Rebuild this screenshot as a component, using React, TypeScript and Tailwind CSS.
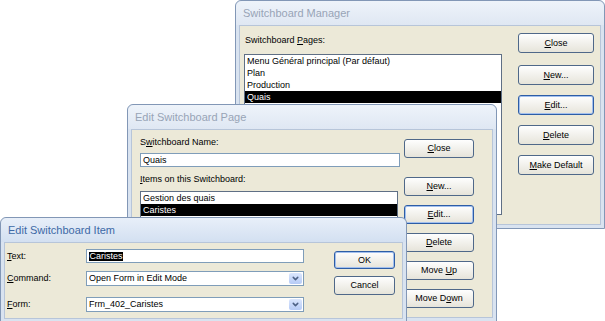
import { ChevronDown } from "lucide-react";
import type { ReactNode } from "react";

// text with the access key underlined
function Mn({ text, k }: { text: string; k?: number }) {
  if (k === undefined) return <span>{text}</span>;
  return (
    <span className="whitespace-pre">
      {text.slice(0, k)}
      <span className="underline underline-offset-1">{text[k]}</span>
      {text.slice(k + 1)}
    </span>
  );
}

function Btn({ label, k, def, cls }: { label: string; k?: number; def?: boolean; cls: string }) {
  return (
    <div
      className={`flex items-center justify-center rounded-[3px] border bg-gradient-to-b from-[#fefefe] to-[#e6e4da] text-[9px] leading-none text-black ${
        def ? "border-[#2d5da6] shadow-[inset_0_0_0_1px_#a3c0ee]" : "border-[#4f6889]"
      } ${cls}`}
    >
      <Mn text={label} k={k} />
    </div>
  );
}

function Win({ title, active, pos, children }: { title: string; active?: boolean; pos: string; children: ReactNode }) {
  return (
    <div className={`absolute flex flex-col rounded-t-[6px] border border-[#8297b6] bg-[#d9e3f0] ${pos}`}>
      <div
        className={`flex h-[24px] shrink-0 items-center rounded-t-[6px] bg-gradient-to-b pl-[7px] text-[11px] ${
          active ? "from-[#e8eff9] to-[#d3e0f1] text-[#3d69a6]" : "from-[#eef3fa] to-[#dfe7f3] text-[#98a4b6]"
        }`}
      >
        {title}
      </div>
      <div className="mx-[3px] mb-[3px] flex flex-1 border border-[#b7c5d9] bg-[#ece9d8]">{children}</div>
    </div>
  );
}

function ListBox({ items, sel, cls }: { items: string[]; sel: number; cls: string }) {
  return (
    <div className={`border border-[#5f6f85] bg-white ${cls}`}>
      {items.map((it, i) => (
        <div
          key={it}
          className={`h-[12px] pl-[2px] text-[9px] leading-[12px] ${i === sel ? "bg-black text-white" : "text-black"}`}
        >
          {it}
        </div>
      ))}
    </div>
  );
}

function Combo({ value }: { value: string }) {
  return (
    <div className="flex h-[15px] w-[218px] items-center border border-[#7f9db9] bg-white pl-[2px] text-[9px] leading-none">
      <span className="flex-1">{value}</span>
      <div className="mr-[1px] flex h-[11px] w-[13px] items-center justify-center rounded-[2px] bg-gradient-to-b from-[#dbe6fd] to-[#b6cbf6]">
        <ChevronDown className="h-[9px] w-[9px] text-[#4d6185]" strokeWidth={4} />
      </div>
    </div>
  );
}

export default function App() {
  return (
    <div className="relative h-[321px] w-[605px] overflow-hidden bg-white font-['Liberation_Sans',Arial,sans-serif]">
      {/* Switchboard Manager */}
      <Win title="Switchboard Manager" pos="left-[235px] top-0 w-[370px] h-[229px]">
        <div className="flex flex-col pl-[4px] pt-[8px]">
          <div className="ml-[1px] h-[12px] text-[9px] leading-[12px]">
            <Mn text="Switchboard Pages:" k={12} />
          </div>
          <ListBox
            cls="mt-[8px] w-[258px] h-[161px]"
            sel={3}
            items={["Menu Général principal (Par défaut)", "Plan", "Production", "Quais"]}
          />
        </div>
        <div className="ml-[16px] flex flex-col gap-[10px] pt-[7px]">
          <Btn label="Close" k={0} cls="w-[76px] h-[20px]" />
          <Btn label="New..." k={0} cls="w-[76px] h-[20px] mt-[2px]" />
          <Btn label="Edit..." k={0} def cls="w-[76px] h-[20px]" />
          <Btn label="Delete" k={0} cls="w-[76px] h-[20px]" />
          <Btn label="Make Default" k={0} cls="w-[76px] h-[20px]" />
        </div>
      </Win>

      {/* Edit Switchboard Page */}
      <Win title="Edit Switchboard Page" pos="left-[127px] top-[104px] w-[370px] h-[218px]">
        <div className="flex w-[269px] flex-col pl-[8px] pt-[6px]">
          <div className="h-[12px] text-[9px] leading-[12px]">
            <Mn text="Switchboard Name:" k={1} />
          </div>
          <div className="mt-[5px] h-[14px] w-[260px] border border-[#7f9db9] bg-white pl-[2px] text-[9px] leading-[12px]">
            Quais
          </div>
          <div className="mt-[6px] h-[12px] text-[9px] leading-[12px]">
            <Mn text="Items on this Switchboard:" k={0} />
          </div>
          <ListBox cls="mt-[6px] w-[258px] h-[110px]" sel={1} items={["Gestion des quais", "Caristes"]} />
        </div>
        <div className="ml-[3px] flex flex-col pt-[9px]">
          <Btn label="Close" k={0} cls="w-[70px] h-[19px]" />
          <Btn label="New..." k={0} cls="w-[70px] h-[19px] mt-[19px]" />
          <Btn label="Edit..." k={0} def cls="w-[70px] h-[19px] mt-[9px]" />
          <Btn label="Delete" k={0} cls="w-[70px] h-[19px] mt-[9px]" />
          <Btn label="Move Up" k={5} cls="w-[70px] h-[19px] mt-[9px]" />
          <Btn label="Move Down" k={6} cls="w-[70px] h-[19px] mt-[9px]" />
        </div>
      </Win>

      {/* Edit Switchboard Item */}
      <Win title="Edit Switchboard Item" active pos="left-0 top-[217px] w-[407px] h-[106px]">
        <div className="flex flex-col pl-[2px] pt-[6px] text-[9px] leading-none">
          <div className="flex h-[14px] items-center">
            <span className="w-[79px]">
              <Mn text="Text:" k={0} />
            </span>
            <div className="flex h-[14px] w-[218px] items-center border border-[#7f9db9] bg-white pl-[2px]">
              <span className="bg-black px-[0.5px] text-white">Caristes</span>
            </div>
          </div>
          <div className="mt-[8px] flex h-[15px] items-center">
            <span className="w-[79px]">
              <Mn text="Command:" k={0} />
            </span>
            <Combo value="Open Form in Edit Mode" />
          </div>
          <div className="mt-[11px] flex h-[15px] items-center">
            <span className="w-[79px]">
              <Mn text="Form:" k={0} />
            </span>
            <Combo value="Frm_402_Caristes" />
          </div>
        </div>
        <div className="ml-[30px] flex flex-col pt-[8px]">
          <Btn label="OK" def cls="w-[61px] h-[18px]" />
          <Btn label="Cancel" cls="w-[61px] h-[19px] mt-[7px]" />
        </div>
      </Win>
    </div>
  );
}
